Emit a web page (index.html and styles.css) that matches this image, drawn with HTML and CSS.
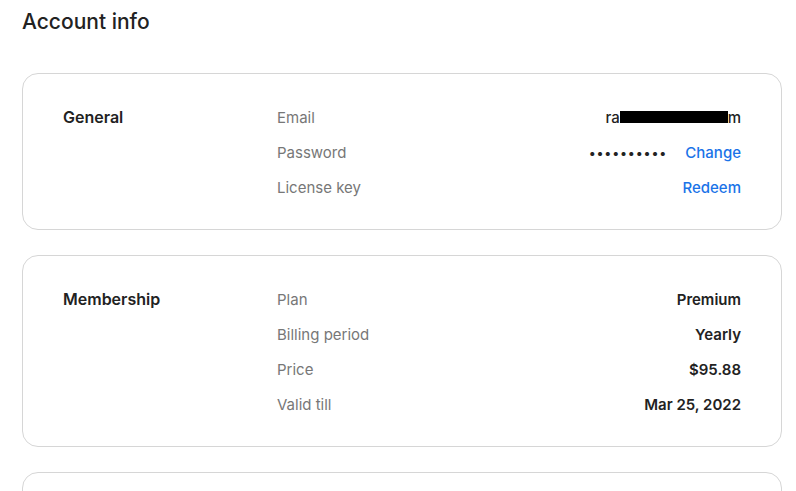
FILE: index.html
```html
<!DOCTYPE html>
<html>
<head>
<meta charset="utf-8">
<link rel="stylesheet" href="styles.css">
</head>
<body>
<div class="page">
  <h1 class="title">Account info</h1>
  <section class="card">
    <h2 class="section-title">General</h2>
    <div class="rows">
      <div class="row"><span class="label">Email</span><span class="value value-light">ra<span class="redact"></span>m</span></div>
      <div class="row"><span class="label">Password</span><span class="value"><span class="dots">••••••••••</span><a class="link">Change</a></span></div>
      <div class="row"><span class="label">License key</span><span class="value"><a class="link">Redeem</a></span></div>
    </div>
  </section>
  <section class="card">
    <h2 class="section-title">Membership</h2>
    <div class="rows">
      <div class="row"><span class="label">Plan</span><span class="value">Premium</span></div>
      <div class="row"><span class="label">Billing period</span><span class="value">Yearly</span></div>
      <div class="row"><span class="label">Price</span><span class="value">$95.88</span></div>
      <div class="row"><span class="label">Valid till</span><span class="value">Mar 25, 2022</span></div>
    </div>
  </section>
  <section class="card card-empty"></section>
</div>
</body>
</html>
```
FILE: styles.css
```css
* { box-sizing: border-box; }
html, body { margin: 0; padding: 0; background: #fff; }
body {
  font-family: Inter, "Noto Sans", sans-serif;
  color: #222;
  overflow: hidden;
  height: 491px;
}
.page {
  padding: 8px 14px 0 22px;
  display: flex;
  flex-direction: column;
}
.title {
  margin: 0 0 37px 0;
  font-size: 21px;
  line-height: 28px;
  font-weight: 500;
  color: #222;
}
.card {
  border: 1px solid #d6d6d6;
  border-radius: 16px;
  padding: 26px 40px 24px 40px;
  display: grid;
  grid-template-columns: 214px 1fr;
  margin-bottom: 25px;
}
.card-empty { height: 60px; }
.section-title {
  margin: 0;
  font-size: 16px;
  line-height: 35px;
  font-weight: 600;
  color: #222;
}
.rows { display: flex; flex-direction: column; }
.row {
  display: flex;
  justify-content: space-between;
  align-items: center;
  height: 35px;
  font-size: 15px;
}
.label { color: #777; font-weight: 400; }
.value { color: #222; font-weight: 600; display: flex; align-items: center; }
.value-light { font-weight: 500; }
.redact {
  display: inline-block;
  width: 108px;
  height: 12px;
  margin-top: -2px;
  background: #000;
}
.dots { letter-spacing: 1.3px; margin-right: 18px; font-size: 13px; color: #222; }
.link { color: #1a73e8; font-weight: 500; cursor: pointer; }
```
